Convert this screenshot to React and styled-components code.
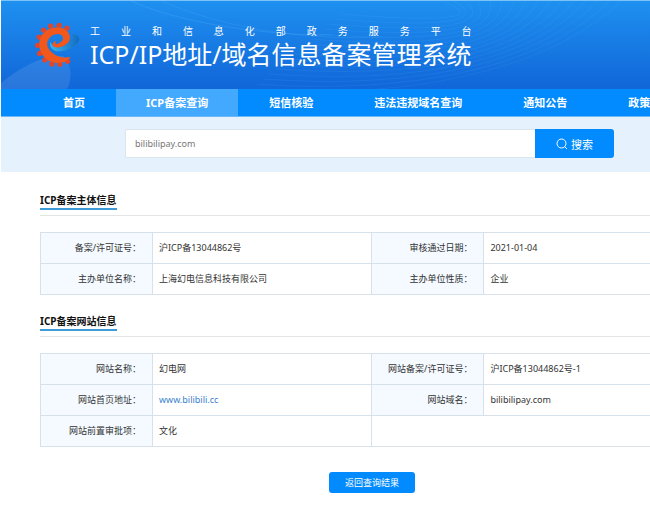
import React from 'react';
import styled, { createGlobalStyle } from 'styled-components';

const GlobalStyle = createGlobalStyle`
  * {
    box-sizing: border-box;
  }

  body {
    margin: 0;
    background: #fff;
    color: #333;
    font-family: 'Noto Sans', 'Noto Sans CJK SC', sans-serif;
    font-size: 9px;
  }

  button,
  input {
    font-family: inherit;
  }
`;

const Page = styled.div`
  padding-left: 1px;
`;

const Header = styled.header`
  position: relative;
  display: flex;
  align-items: center;
  gap: 10px;
  height: 89px;
  padding: 0 34px;
  border-top: 1px solid #7cc2f6;
  background: linear-gradient(#1e90f0, #1166d8);
  color: #fff;
`;

const HeaderArt = styled.svg`
  position: absolute;
  inset: 0;
  width: 100%;
  height: 100%;
`;

const Logo = styled.svg`
  position: relative;
  width: 45px;
  height: 46px;
  flex: none;
`;

const Brand = styled.div`
  position: relative;
  display: grid;
  padding-top: 4px;
`;

const Ministry = styled.p`
  margin: 0;
  font-size: 10px;
  line-height: 14px;
  text-align-last: justify;
`;

const SystemName = styled.h1`
  margin: 0;
  font-size: 25px;
  font-weight: 400;
  line-height: 32px;
`;

const Nav = styled.nav`
  display: flex;
  gap: 1px;
  height: 28px;
  padding-left: 32px;
  border-bottom: 1px solid #6ab8f5;
  background: #028bfe;
  overflow: hidden;
`;

const NavLink = styled.a`
  flex: none;
  padding: 0 30px;
  background: ${({ $active }) => ($active ? '#42a9fe' : 'transparent')};
  color: #fff;
  font-size: 11px;
  font-weight: 700;
  line-height: 27px;
  text-decoration: none;

  &:last-child {
    padding-right: 0;
  }
`;

const SearchBar = styled.form`
  display: flex;
  padding: 12px 36px 14px 124px;
  background: #e5f2fd;
`;

const SearchInput = styled.input`
  flex: 1;
  min-width: 0;
  height: 29px;
  padding: 0 9px;
  border: 1px solid #dce6ee;
  border-right: 0;
  border-radius: 2px 0 0 2px;
  outline: none;
  background: #fff;
  color: #777;
  font-size: 9px;
`;

const Button = styled.button`
  display: inline-flex;
  align-items: center;
  justify-content: center;
  gap: 3px;
  border: 0;
  background: #028bfe;
  color: #fff;
  cursor: pointer;
`;

const SearchButton = styled(Button)`
  width: 79px;
  border-radius: 0 3px 3px 0;
  font-size: 11px;
`;

const BackButton = styled(Button)`
  height: 21px;
  padding: 0 16px;
  border-radius: 3px;
  font-size: 9px;
`;

const Main = styled.main`
  padding: 21px 0 0 39px;
`;

const Section = styled.section`
  margin-bottom: 19px;
`;

const SectionHead = styled.div`
  margin-bottom: 16px;
  padding-bottom: 5px;
  border-bottom: 1px solid #e2e4e6;
`;

const SectionTitle = styled.h2`
  width: fit-content;
  margin: 0;
  border-bottom: 2px solid #3d9bd8;
  color: #111;
  font-size: 10px;
  font-weight: 700;
  line-height: 15px;
`;

const Table = styled.table`
  width: 100%;
  table-layout: fixed;
  border-collapse: collapse;
`;

const LabelColumn = styled.col`
  width: 112px;
`;

const ValueColumn = styled.col`
  width: ${({ $width }) => $width || 'auto'};
`;

const cell = `
  height: 31px;
  border: 1px solid #d6e1ea;
  font-weight: 400;
  line-height: 14px;

  &:last-child {
    border-right: 0;
  }
`;

const Label = styled.th`
  ${cell}
  padding: 0 11px 0 0;
  background: #f4faff;
  text-align: right;
`;

const Value = styled.td`
  ${cell}
  padding: 0 6px;
`;

const SiteLink = styled.a`
  color: #3a82cc;
  text-decoration: none;
`;

const Actions = styled.div`
  display: flex;
  justify-content: center;
  padding: 6px 0 0 54px;
`;

const navItems = ['首页', 'ICP备案查询', '短信核验', '违法违规域名查询', '通知公告', '政策'];

const subjectRows = [
  [['备案/许可证号', '沪ICP备13044862号'], ['审核通过日期', '2021-01-04']],
  [['主办单位名称', '上海幻电信息科技有限公司'], ['主办单位性质', '企业']],
];

const siteRows = [
  [['网站名称', '幻电网'], ['网站备案/许可证号', '沪ICP备13044862号-1']],
  [['网站首页地址', <SiteLink href="#site">www.bilibili.cc</SiteLink>], ['网站域名', 'bilibilipay.com']],
  [['网站前置审批项', '文化']],
];

const teeth = [
  [125, 48], [101, 40], [75, 42], [53, 54], [40, 76], [35, 101],
  [41, 126], [57, 146], [79, 158], [103, 159], [127, 150],
];

const GearLogo = () => (
  <Logo viewBox="27 30 138 140" aria-hidden="true">
    <defs>
      <linearGradient id="swoosh" x1="0" y1="0" x2="1" y2="0">
        <stop offset="0" stopColor="#3cb4ee" />
        <stop offset="1" stopColor="#126cc0" />
      </linearGradient>
    </defs>
    <path
      d="M74 90C70 110 84 122 106 119C134 116 162 98 163 82C162 72 152 66 140 68C148 78 136 96 114 104C96 111 80 106 74 90Z"
      fill="url(#swoosh)"
    />
    {teeth.map(([x, y]) => (
      <circle key={x} cx={x} cy={y} r="8" fill="#e2452a" />
    ))}
    <path
      d="M134 78C134 56 114 45 91 46C60 47 39 72 40 100C41 131 65 155 96 155C114 155 128 150 135 137C120 140 100 138 86 128C66 116 58 96 70 80C82 64 106 62 112 74C116 84 106 94 95 97C90 98 88 94 92 88C82 90 78 98 82 103C88 110 104 108 116 102C128 96 134 90 134 78Z"
      fill="#f2571c"
    />
  </Logo>
);

const HeaderBackground = () => (
  <HeaderArt viewBox="0 0 648 88" preserveAspectRatio="xMinYMin slice" aria-hidden="true">
    <path d="M0 82C24 62 46 54 62 55C70 62 72 76 66 88H0Z" fill="#fff" opacity="0.1" />
    <g fill="none" stroke="#6cc4ff">
      {Array.from({ length: 16 }, (_, i) => (
        <path
          key={i}
          opacity="0.1"
          d={`M${250 + i * 6} ${88 - i * 5}C${400 + i * 4} ${98 - i * 5} ${540 - i * 4} ${74 - i * 4} ${620 - i * 12} 0`}
        />
      ))}
      <path opacity="0.2" d="M130 0C180 22 260 34 330 34" />
      <path opacity="0.15" d="M160 0C220 26 300 40 380 36" />
    </g>
  </HeaderArt>
);

const InfoSection = ({ title, rows }) => (
  <Section>
    <SectionHead>
      <SectionTitle>{title}</SectionTitle>
    </SectionHead>
    <Table>
      <colgroup>
        <LabelColumn />
        <ValueColumn $width="36%" />
        <LabelColumn />
        <ValueColumn />
      </colgroup>
      <tbody>
        {rows.map((row) => (
          <tr key={row[0][0]}>
            {row.map(([label, value]) => (
              <React.Fragment key={label}>
                <Label scope="row">{label}：</Label>
                <Value>{value}</Value>
              </React.Fragment>
            ))}
            {row.length === 1 && <Value colSpan={2} />}
          </tr>
        ))}
      </tbody>
    </Table>
  </Section>
);

const App = () => {
  return (
    <Page>
      <GlobalStyle />
      <Header>
        <HeaderBackground />
        <GearLogo />
        <Brand>
          <Ministry>工业和信息化部政务服务平台</Ministry>
          <SystemName>ICP/IP地址/域名信息备案管理系统</SystemName>
        </Brand>
      </Header>
      <Nav>
        {navItems.map((item) => (
          <NavLink key={item} href="#nav" $active={item === 'ICP备案查询'}>
            {item}
          </NavLink>
        ))}
      </Nav>
      <SearchBar onSubmit={(e) => e.preventDefault()}>
        <SearchInput type="text" aria-label="域名" defaultValue="bilibilipay.com" />
        <SearchButton type="submit">
          <svg width="12" height="12" viewBox="0 0 12 12" fill="none" stroke="#fff" aria-hidden="true">
            <circle cx="5.5" cy="5.5" r="4.5" />
            <path d="M8.5 8.5L11 11" />
          </svg>
          搜索
        </SearchButton>
      </SearchBar>
      <Main>
        <InfoSection title="ICP备案主体信息" rows={subjectRows} />
        <InfoSection title="ICP备案网站信息" rows={siteRows} />
        <Actions>
          <BackButton type="button">返回查询结果</BackButton>
        </Actions>
      </Main>
    </Page>
  );
};

export default App;
